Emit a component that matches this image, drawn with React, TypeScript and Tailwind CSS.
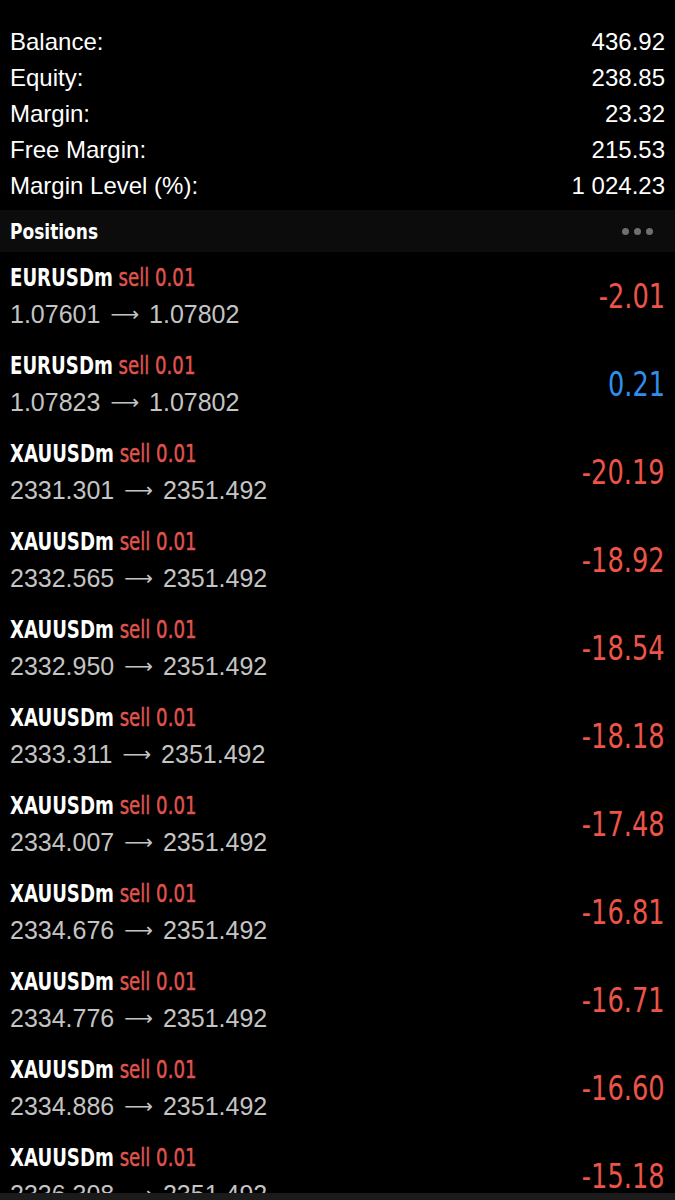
const summary = [
  { label: 'Balance:', value: '436.92' },
  { label: 'Equity:', value: '238.85' },
  { label: 'Margin:', value: '23.32' },
  { label: 'Free Margin:', value: '215.53' },
  { label: 'Margin Level (%):', value: '1 024.23' },
];

const positions = [
  { symbol: 'EURUSDm', open: '1.07601', price: '1.07802', profit: '-2.01' },
  { symbol: 'EURUSDm', open: '1.07823', price: '1.07802', profit: '0.21' },
  { symbol: 'XAUUSDm', open: '2331.301', price: '2351.492', profit: '-20.19' },
  { symbol: 'XAUUSDm', open: '2332.565', price: '2351.492', profit: '-18.92' },
  { symbol: 'XAUUSDm', open: '2332.950', price: '2351.492', profit: '-18.54' },
  { symbol: 'XAUUSDm', open: '2333.311', price: '2351.492', profit: '-18.18' },
  { symbol: 'XAUUSDm', open: '2334.007', price: '2351.492', profit: '-17.48' },
  { symbol: 'XAUUSDm', open: '2334.676', price: '2351.492', profit: '-16.81' },
  { symbol: 'XAUUSDm', open: '2334.776', price: '2351.492', profit: '-16.71' },
  { symbol: 'XAUUSDm', open: '2334.886', price: '2351.492', profit: '-16.60' },
  { symbol: 'XAUUSDm', open: '2336.308', price: '2351.492', profit: '-15.18' },
];

// narrow face used by the app for symbols / profit
const condensed = "font-['DejaVu_Sans_Condensed','DejaVu_Sans',sans-serif]";

export default function App() {
  return (
    <div className="relative h-[1200px] w-[675px] overflow-hidden bg-black font-['Liberation_Sans',Arial,sans-serif] text-white">
      {/* account summary */}
      <div className="flex flex-col pt-[24px] pb-[6px]">
        {summary.map((s) => (
          <div key={s.label} className="flex h-[36px] items-center justify-between px-[10px] text-[24px] leading-none">
            <span>{s.label}</span>
            <span>{s.value}</span>
          </div>
        ))}
      </div>

      {/* section header */}
      <div className="flex h-[42px] items-center justify-between bg-[#0c0c0c] pl-[10px] pr-[22px]">
        <span className={`${condensed} inline-block origin-left scale-x-[0.86] text-[22px] font-bold`}>Positions</span>
        <div className="flex gap-[5px]">
          <span className="h-[7px] w-[7px] rounded-full bg-[#6f6f6f]" />
          <span className="h-[7px] w-[7px] rounded-full bg-[#6f6f6f]" />
          <span className="h-[7px] w-[7px] rounded-full bg-[#6f6f6f]" />
        </div>
      </div>

      {/* positions list */}
      <div className="flex flex-col">
        {positions.map((p, i) => (
          <div key={i} className="flex h-[88px] items-center justify-between px-[10px]">
            <div className="flex flex-col gap-[10px]">
              <div className={`${condensed} origin-left scale-x-[0.84] whitespace-nowrap text-[24px] leading-[26px]`}>
                <span className="font-bold text-white">{p.symbol}</span>{' '}
                <span className="text-[#e0544e] [-webkit-text-stroke:0.4px_#e0544e]">sell 0.01</span>
              </div>
              <div className="flex items-center whitespace-nowrap text-[25px] leading-[26px] text-[#c4c4c4]">
                <span>{p.open}</span>
                <span className="mx-[10px] font-['DejaVu_Sans',sans-serif] text-[20px]">⟶</span>
                <span>{p.price}</span>
              </div>
            </div>
            <span
              className={`${condensed} inline-block origin-right scale-x-[0.84] text-[34px] leading-none ${
                p.profit.startsWith('-') ? 'text-[#ec5448]' : 'text-[#2f8fec]'
              }`}
            >
              {p.profit}
            </span>
          </div>
        ))}
      </div>

      {/* bottom bar peeking in */}
      <div className="absolute bottom-0 left-0 h-[7px] w-full bg-[#1b1b1b]" />
    </div>
  );
}
